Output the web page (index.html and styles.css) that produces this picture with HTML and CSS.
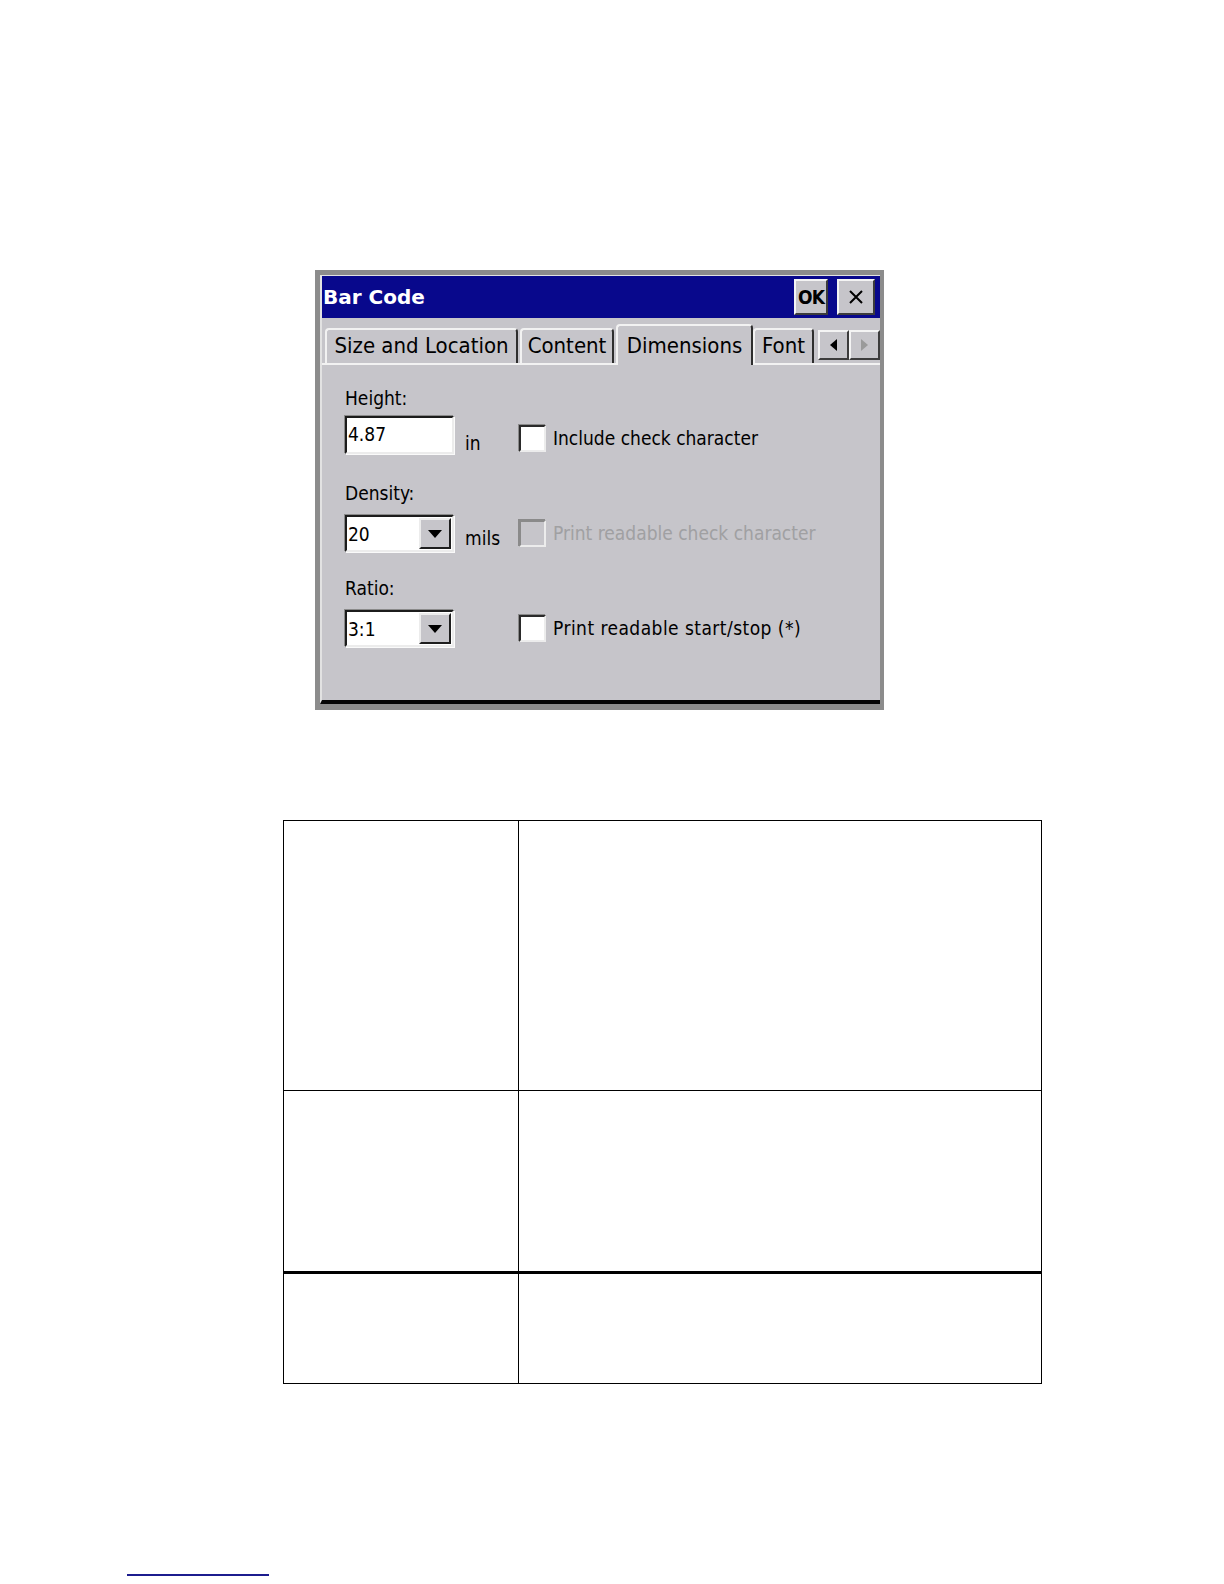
FILE: index.html
```html
<!DOCTYPE html>
<html lang="en">
<head>
<meta charset="utf-8">
<title>Bar Code</title>
<link rel="stylesheet" href="styles.css">
</head>
<body>
<div class="page">
  <div class="dialog">
    <div class="window">
      <div class="titlebar">
        <span class="title">Bar Code</span>
        <div class="tbtns">
          <div class="tbtn ok">OK</div>
          <div class="tbtn close">
            <svg width="16" height="16" viewBox="0 0 16 16"><path d="M2 2 L14 14 M14 2 L2 14" stroke="#000" stroke-width="2" fill="none"/></svg>
          </div>
        </div>
      </div>
      <div class="tabs">
        <div class="tab t1">Size and Location</div>
        <div class="tab t2">Content</div>
        <div class="tab t3 active">Dimensions</div>
        <div class="tab t4">Font</div>
        <div class="scroller">
          <div class="sbtn"><svg width="7" height="12" viewBox="0 0 7 12"><path d="M7 0 L0 6 L7 12 Z" fill="#000"/></svg></div>
          <div class="sbtn"><svg width="7" height="12" viewBox="0 0 7 12"><path d="M0 0 L7 6 L0 12 Z" fill="#9a9a9a"/></svg></div>
        </div>
      </div>
      <div class="panel">
        <div class="group">
          <div class="label">Height:</div>
          <div class="row">
            <div class="field">4.87</div>
            <span class="unit">in</span>
            <span class="check"></span>
            <span class="clabel">Include check character</span>
          </div>
        </div>
        <div class="group">
          <div class="label">Density:</div>
          <div class="row">
            <div class="field combo"><span class="val">20</span><span class="drop"><svg width="14" height="8" viewBox="0 0 14 8"><path d="M0 0 L14 0 L7 8 Z" fill="#000"/></svg></span></div>
            <span class="unit">mils</span>
            <span class="check disabled"></span>
            <span class="clabel disabled">Print readable check character</span>
          </div>
        </div>
        <div class="group">
          <div class="label">Ratio:</div>
          <div class="row">
            <div class="field combo"><span class="val">3:1</span><span class="drop"><svg width="14" height="8" viewBox="0 0 14 8"><path d="M0 0 L14 0 L7 8 Z" fill="#000"/></svg></span></div>
            <span class="unit"></span>
            <span class="check"></span>
            <span class="clabel wide">Print readable start/stop (*)</span>
          </div>
        </div>
      </div>
    </div>
  </div>

  <table class="grid">
    <tr class="r1"><td class="c1"></td><td class="c2"></td></tr>
    <tr class="r2"><td class="c1"></td><td class="c2"></td></tr>
    <tr class="r3"><td class="c1"></td><td class="c2"></td></tr>
  </table>

  <div class="footline"></div>
</div>
</body>
</html>
```

FILE: styles.css
```css
html, body {
  margin: 0;
  padding: 0;
  background: #ffffff;
}

.page {
  width: 1224px;
  padding-top: 1px;
  font-family: "DejaVu Sans Condensed", "DejaVu Sans", sans-serif;
  font-stretch: condensed;
}

/* ---------- dialog ---------- */
.dialog {
  margin: 269px 0 0 315px;
  width: 569px;
  height: 440px;
  box-sizing: border-box;
  padding: 5px 4px 6px 5px;
  background: #8c8c8c;
}

.window {
  height: 100%;
  box-sizing: border-box;
  background: #c6c5ca;
  border-top: 1px solid #e2e2e2;
  border-left: 2px solid #e2e2e2;
  border-bottom: 4px solid #050505;
  display: flex;
  flex-direction: column;
  overflow: hidden;
}

.titlebar {
  height: 42px;
  flex: none;
  background: #08088c;
  display: flex;
  align-items: center;
  justify-content: space-between;
  padding: 0 5px 0 1px;
}

.title {
  color: #ffffff;
  font-family: "DejaVu Sans", sans-serif;
  font-stretch: normal;
  font-weight: bold;
  font-size: 20px;
  line-height: 42px;
}

.tbtns {
  display: flex;
  gap: 9px;
}

.tbtn {
  box-sizing: border-box;
  width: 38px;
  height: 36px;
  background: #c6c5ca;
  border: 2px solid;
  border-color: #f4f4f4 #3c3c3c #3c3c3c #f4f4f4;
  display: flex;
  align-items: center;
  justify-content: center;
}

.ok {
  width: 34px;
  font-weight: bold;
  font-size: 19px;
  letter-spacing: -1px;
  color: #000;
}

/* ---------- tabs ---------- */
.tabs {
  flex: none;
  display: flex;
  align-items: flex-end;
  padding: 6px 0 0 3px;
  border-bottom: 2px solid #f2f2f2;
  font-size: 22px;
  color: #000;
}

.tab {
  box-sizing: border-box;
  height: 35px;
  border: 2px solid;
  border-bottom: none;
  border-color: #f2f2f2 #2e2e2e #2e2e2e #f2f2f2;
  border-radius: 4px 4px 0 0;
  line-height: 32px;
  text-align: center;
  white-space: nowrap;
}

.t1 { width: 193px; margin-right: 2px; }
.t2 { width: 94px; margin-right: 2px; }
.t3 { width: 137px; }
.t4 { width: 61px; }

.tab.active {
  height: 41px;
  padding-top: 4px;
  margin-bottom: -2px;
  background: #c6c5ca;
  position: relative;
  z-index: 1;
}

.scroller {
  display: flex;
  margin-left: 4px;
  margin-bottom: 3px;
}

.sbtn {
  box-sizing: border-box;
  width: 31px;
  height: 30px;
  background: #c6c5ca;
  border: 2px solid;
  border-color: #f4f4f4 #3c3c3c #3c3c3c #f4f4f4;
  display: flex;
  align-items: center;
  justify-content: center;
}

/* ---------- panel ---------- */
.panel {
  flex: 1;
  padding: 22px 0 0 23px;
  font-size: 19px;
  color: #000;
  display: flex;
  flex-direction: column;
  gap: 28px;
}

.label {
  line-height: 22px;
  height: 22px;
  margin-bottom: 7px;
}

.row {
  display: grid;
  grid-template-columns: 109px 65px 27px auto;
  grid-template-rows: 38px;
  height: 38px;
}

.field {
  box-sizing: border-box;
  height: 38px;
  background: #ffffff;
  border: 2px solid;
  border-color: #1c1c1c #ececec #ececec #1c1c1c;
  box-shadow: -1px -1px 0 #8a8a8a, 1px 1px 0 #fafafa;
  padding: 0 0 2px 1px;
  line-height: 32px;
}

.combo {
  display: flex;
  justify-content: space-between;
  align-items: stretch;
  align-self: start;
  height: 37px;
  margin-top: 4px;
  padding-bottom: 0;
}

.combo .val {
  line-height: 34px;
}

.drop {
  box-sizing: border-box;
  width: 32px;
  margin: 1px 1px 1px 0;
  background: #c6c5ca;
  border: 2px solid;
  border-color: #ececec #1e1e1e #1e1e1e #ececec;
  display: flex;
  align-items: center;
  justify-content: center;
}

.unit {
  align-self: end;
  line-height: 22px;
  padding-left: 11px;
}

.check {
  box-sizing: border-box;
  width: 27px;
  height: 27px;
  align-self: center;
  margin-top: 6px;
  background: #ffffff;
  border: 2px solid;
  border-color: #2a2a2a #ececec #ececec #2a2a2a;
  box-shadow: -1px -1px 0 #8a8a8a;
}

.check.disabled {
  background: #c6c5ca;
  border-color: #8a8a8a #ececec #ececec #8a8a8a;
}

.clabel {
  align-self: center;
  margin-top: 6px;
  line-height: 22px;
  padding-left: 7px;
  white-space: nowrap;
}

.clabel.wide {
  letter-spacing: 0.45px;
}

.clabel.disabled {
  color: #a0a0a2;
}

/* ---------- table ---------- */
.grid {
  margin: 110px 0 0 283px;
  width: 759px;
  border-collapse: collapse;
  table-layout: fixed;
}

.grid td {
  border: 1px solid #000;
  padding: 0;
}

.grid .c1 { width: 234px; }

.r1 td { height: 269px; }
.r2 td { height: 180px; }
.r3 td { height: 109px; border-top: 3px solid #000; }

.footline {
  margin: 190px 0 0 127px;
  width: 142px;
  height: 2px;
  background: #1c1c8e;
}
```
